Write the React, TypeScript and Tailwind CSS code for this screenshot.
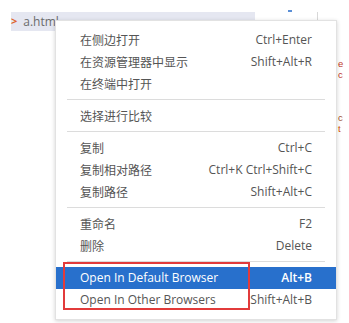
import React from "react"

type Item = { label: string; keys?: string }

const groups: Item[][] = [
  [
    { label: "在侧边打开", keys: "Ctrl+Enter" },
    { label: "在资源管理器中显示", keys: "Shift+Alt+R" },
    { label: "在终端中打开" },
  ],
  [{ label: "选择进行比较" }],
  [
    { label: "复制", keys: "Ctrl+C" },
    { label: "复制相对路径", keys: "Ctrl+K Ctrl+Shift+C" },
    { label: "复制路径", keys: "Shift+Alt+C" },
  ],
  [
    { label: "重命名", keys: "F2" },
    { label: "删除", keys: "Delete" },
  ],
]

const cjk = { fontFamily: '"Noto Sans CJK SC", "Open Sans", sans-serif' }
const latin = { fontFamily: '"Open Sans", "Noto Sans", sans-serif' }
const code = { fontFamily: '"Liberation Sans", Arial, sans-serif' }

const Row = ({ item, active }: { item: Item; active?: boolean }) => (
  <div
    className={`flex h-[22px] items-center justify-between pl-[24px] pr-[24px] text-[12px] ${
      active ? "bg-[#2870cc] text-white" : "text-[#555555]"
    }`}
  >
    <span style={/[A-Za-z]/.test(item.label) ? latin : cjk}>{item.label}</span>
    {item.keys && (
      <span style={latin} className={active ? "font-semibold" : ""}>
        {item.keys}
      </span>
    )}
  </div>
)

const Sep = () => <div className="mx-[11px] mt-[4px] mb-[5px] h-px bg-[#dcdcdc]" />

export default function App() {
  return (
    <div className="relative h-[323px] w-[349px] overflow-hidden bg-white">
      {/* editor behind the menu */}
      <div className="flex pt-[12px] pl-[11px]">
        <div className="flex h-[19px] w-[244px] items-center bg-[#e5e7f1]">
          <span className="text-[11px] font-bold text-[#e0642e]" style={latin}>
            &gt;
          </span>
          <span className="ml-[6px] text-[12px] text-[#6b6b6b]" style={latin}>
            a.html
          </span>
        </div>
        <div className="relative w-[63px] border-r border-[#d8d8d8]">
          <span className="absolute left-[33px] top-[-2px] h-[2px] w-[4px] bg-[#5b8fd6]" />
        </div>
      </div>
      <div className="ml-[338px] mt-[27px] flex flex-col text-[9.5px] leading-[11px]" style={code}>
        <span className="text-[#c0392b]">e</span>
        <span className="text-[#c0392b]">c</span>
        <span className="mt-[32px] text-[#a0522d]">c</span>
        <span className="text-[#d35400]">t</span>
      </div>

      {/* context menu */}
      <div className="absolute left-[55px] top-[20px] w-[282px] border border-[#e2e2e2] bg-white pt-[8px] pb-[8px] shadow-[0_1px_4px_rgba(0,0,0,0.18)]">
        {groups.map((g, i) => (
          <div key={i}>
            {g.map((it) => (
              <Row key={it.label} item={it} />
            ))}
            <Sep />
          </div>
        ))}
        <Row item={{ label: "Open In Default Browser", keys: "Alt+B" }} active />
        <Row item={{ label: "Open In Other Browsers", keys: "Shift+Alt+B" }} />
        <div className="absolute left-[7px] top-[241px] h-[48px] w-[187px] border-2 border-[#e23b3b]" />
      </div>
    </div>
  )
}
